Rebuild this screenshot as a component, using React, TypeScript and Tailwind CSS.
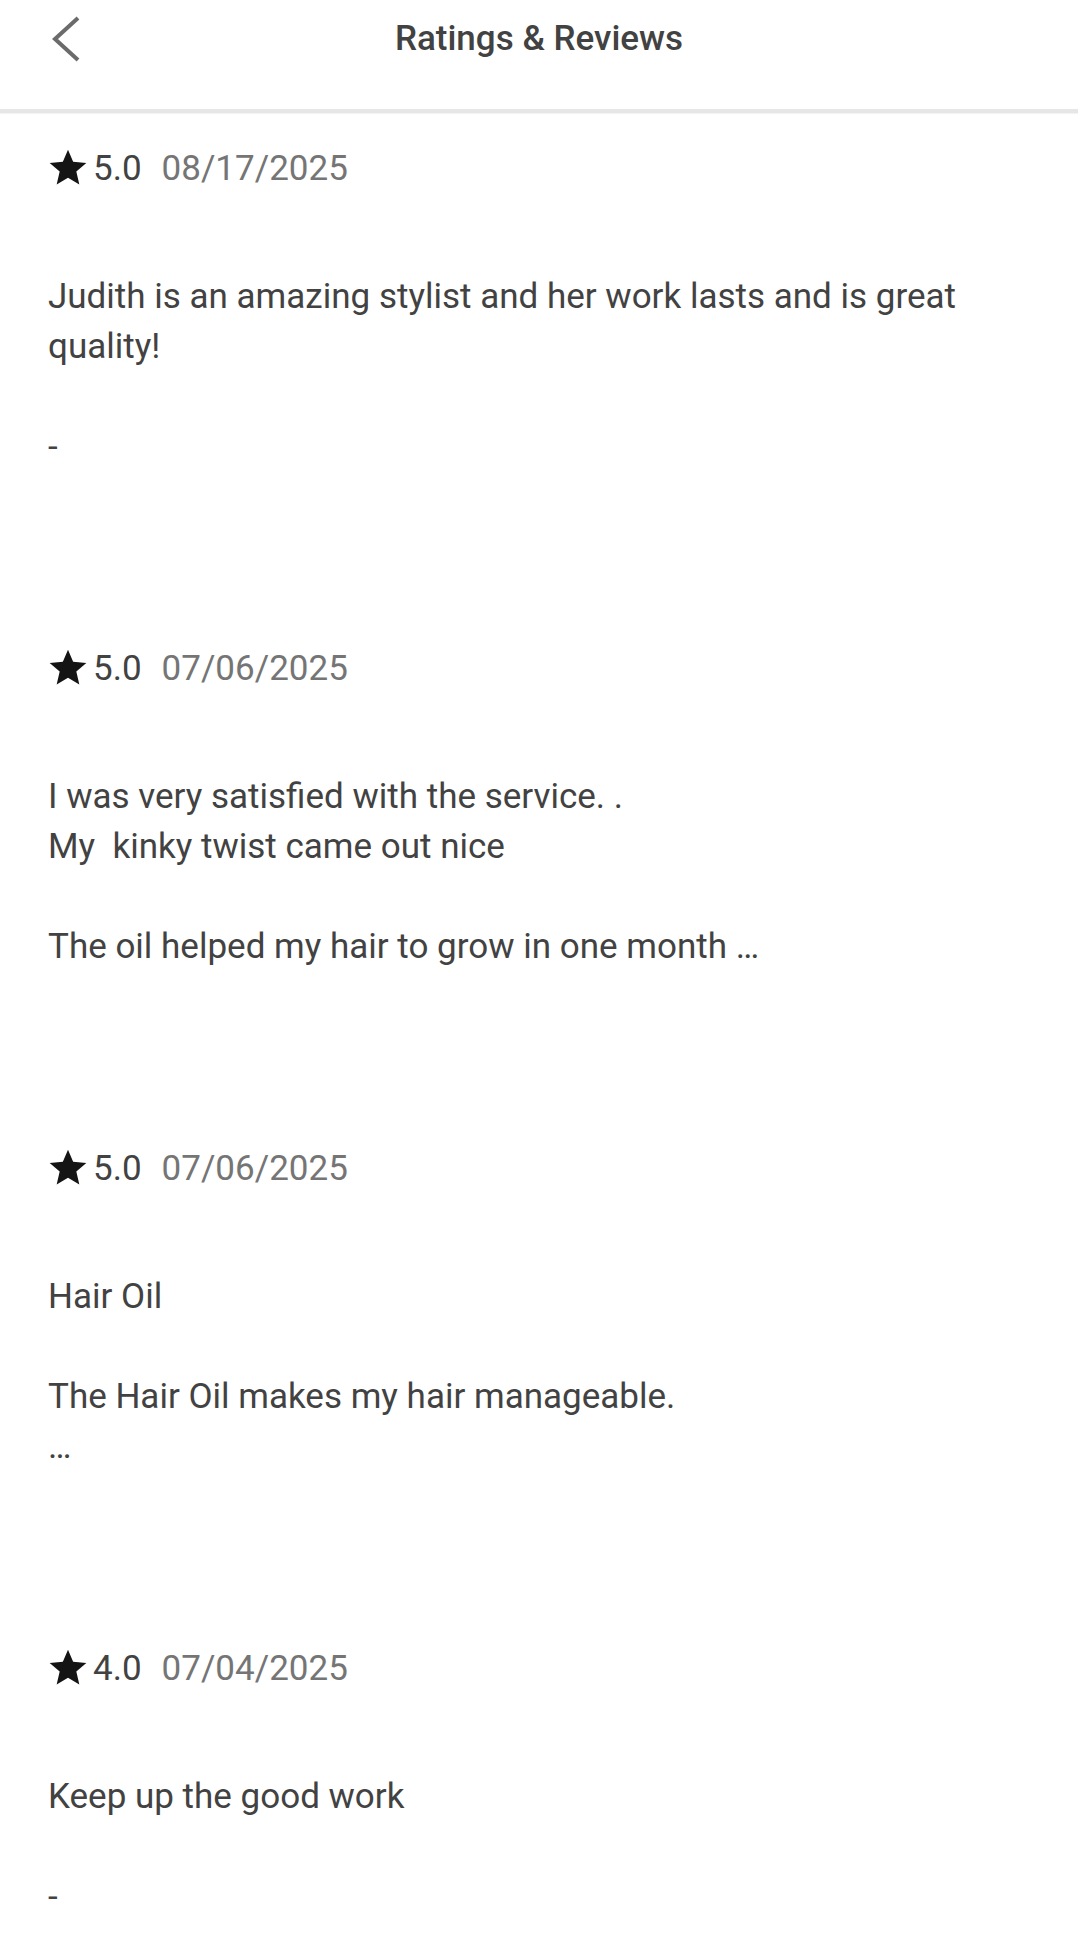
import React from "react";

type Review = {
  rating: string;
  date: string;
  text: string;
};

const reviews: Review[] = [
  {
    rating: "5.0",
    date: "08/17/2025",
    text: "Judith is an amazing stylist and her work lasts and is great quality!\n\n-",
  },
  {
    rating: "5.0",
    date: "07/06/2025",
    text: "I was very satisfied with the service. .\nMy  kinky twist came out nice\n\nThe oil helped my hair to grow in one month …",
  },
  {
    rating: "5.0",
    date: "07/06/2025",
    text: "Hair Oil\n\nThe Hair Oil makes my hair manageable.\n…",
  },
  {
    rating: "4.0",
    date: "07/04/2025",
    text: "Keep up the good work\n\n-",
  },
];

const StarIcon = () => (
  <svg viewBox="0 0 24 24" className="h-11 w-11 shrink-0" fill="#141414">
    <path d="M12 17.27L18.18 21l-1.64-7.03L22 9.24l-7.19-.61L12 2 9.19 8.63 2 9.24l5.46 4.73L5.82 21z" />
  </svg>
);

const BackIcon = () => (
  <svg width="30" height="48" viewBox="0 0 30 48" fill="none">
    <polyline
      points="26,3 3,24 26,45"
      stroke="#6b6b6b"
      strokeWidth="4"
      strokeLinecap="butt"
      strokeLinejoin="miter"
    />
  </svg>
);

const ReviewItem = ({ review }: { review: Review }) => {
  return (
    <div className="flex h-[500px] flex-col px-[48px]">
      <div className="-ml-[2px] flex h-11 items-center">
        <StarIcon />
        <span className="ml-[3px] text-[35px] leading-none text-[#424242]">
          {review.rating}
        </span>
        <span className="ml-[20px] text-[35px] leading-none text-[#757575]">
          {review.date}
        </span>
      </div>
      <p className="mt-[82px] whitespace-pre-wrap text-[35px] leading-[50px] text-[#424242]">
        {review.text}
      </p>
    </div>
  );
};

export default function App() {
  return (
    <div
      className="h-[1935px] w-full overflow-hidden bg-white"
      style={{ fontFamily: "Roboto, 'Noto Sans', sans-serif" }}
    >
      <header className="h-[109px]">
        <div className="grid h-[78px] grid-cols-[1fr_auto_1fr] items-center">
          <button className="ml-[52px] flex items-center justify-self-start">
            <BackIcon />
          </button>
          <h1 className="text-[35px] font-medium text-[#424242]">
            Ratings &amp; Reviews
          </h1>
          <div />
        </div>
      </header>
      <div className="h-1 bg-[#e6e6e6]" />
      <div className="h-px bg-[#f3f3f3]" />
      <main className="pt-[32px]">
        {reviews.map((review, idx) => (
          <ReviewItem key={idx} review={review} />
        ))}
      </main>
    </div>
  );
}
